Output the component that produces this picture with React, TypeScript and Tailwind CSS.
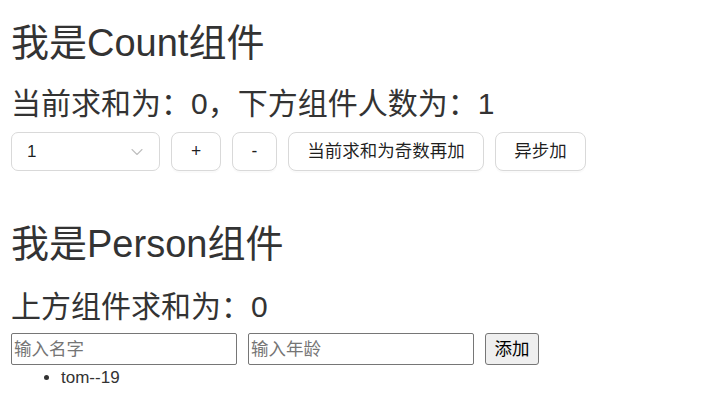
import { ChevronDown } from 'lucide-react';

const font = { fontFamily: '"Liberation Sans", "Noto Sans CJK SC", sans-serif' };

function Count() {
  return (
    <div>
      <h2 className="mt-[22px] h-[40px] text-[38px] leading-[40px] text-[#333]">我是Count组件</h2>
      <h4 className="mt-[24px] h-[34px] text-[30px] leading-[34px] text-[#333]">当前求和为：0，下方组件人数为：1</h4>
      <div className="mt-[11px] flex items-center gap-[11px]">
        <div className="flex h-[39px] w-[149px] items-center justify-between rounded-[7px] border border-[#d9d9d9] bg-white pl-[15px] pr-[12px] text-[17px] text-[#000000e0]">
          <span>1</span>
          <ChevronDown size={20} strokeWidth={1.3} className="text-[#bfbfbf]" />
        </div>
        <button className="h-[39px] w-[50px] rounded-[8px] border border-[#d9d9d9] bg-white text-[17.5px] text-[#000000e0] shadow-[0_2px_0_rgba(0,0,0,0.02)]">+</button>
        <button className="h-[39px] w-[45px] rounded-[8px] border border-[#d9d9d9] bg-white text-[17.5px] text-[#000000e0] shadow-[0_2px_0_rgba(0,0,0,0.02)]">-</button>
        <button className="h-[39px] w-[196px] rounded-[8px] border border-[#d9d9d9] bg-white text-[17.5px] text-[#000000e0] shadow-[0_2px_0_rgba(0,0,0,0.02)]">当前求和为奇数再加</button>
        <button className="h-[39px] w-[91px] rounded-[8px] border border-[#d9d9d9] bg-white text-[17.5px] text-[#000000e0] shadow-[0_2px_0_rgba(0,0,0,0.02)]">异步加</button>
      </div>
    </div>
  );
}

function Person() {
  const persons = [{ id: '001', name: 'tom', age: 19 }];
  return (
    <div>
      <h2 className="mt-[53px] h-[40px] text-[38px] leading-[40px] text-[#333]">我是Person组件</h2>
      <h4 className="mt-[26px] h-[34px] text-[30px] leading-[34px] text-[#333]">上方组件求和为：0</h4>
      <div className="mt-[9px] flex items-center gap-[11px]">
        <input
          placeholder="输入名字"
          className="h-[32px] w-[226px] rounded-[2px] border border-[#767676] bg-white px-[2px] text-[17.5px] outline-none placeholder:text-[#757575]"
        />
        <input
          placeholder="输入年龄"
          className="h-[32px] w-[226px] rounded-[2px] border border-[#767676] bg-white px-[2px] text-[17.5px] outline-none placeholder:text-[#757575]"
        />
        <button className="h-[32px] w-[54px] rounded-[3px] border border-[#767676] bg-[#efefef] text-[17.5px] text-black">添加</button>
      </div>
      <ul className="mt-[3px] list-disc pl-[50px] text-[17px] leading-[20px] text-[#333]">
        {persons.map((p) => (
          <li key={p.id}>{p.name}--{p.age}</li>
        ))}
      </ul>
    </div>
  );
}

export default function App() {
  return (
    <div className="h-[412px] w-[706px] overflow-hidden bg-white pl-[11px] pt-px" style={font}>
      <Count />
      <Person />
    </div>
  );
}
